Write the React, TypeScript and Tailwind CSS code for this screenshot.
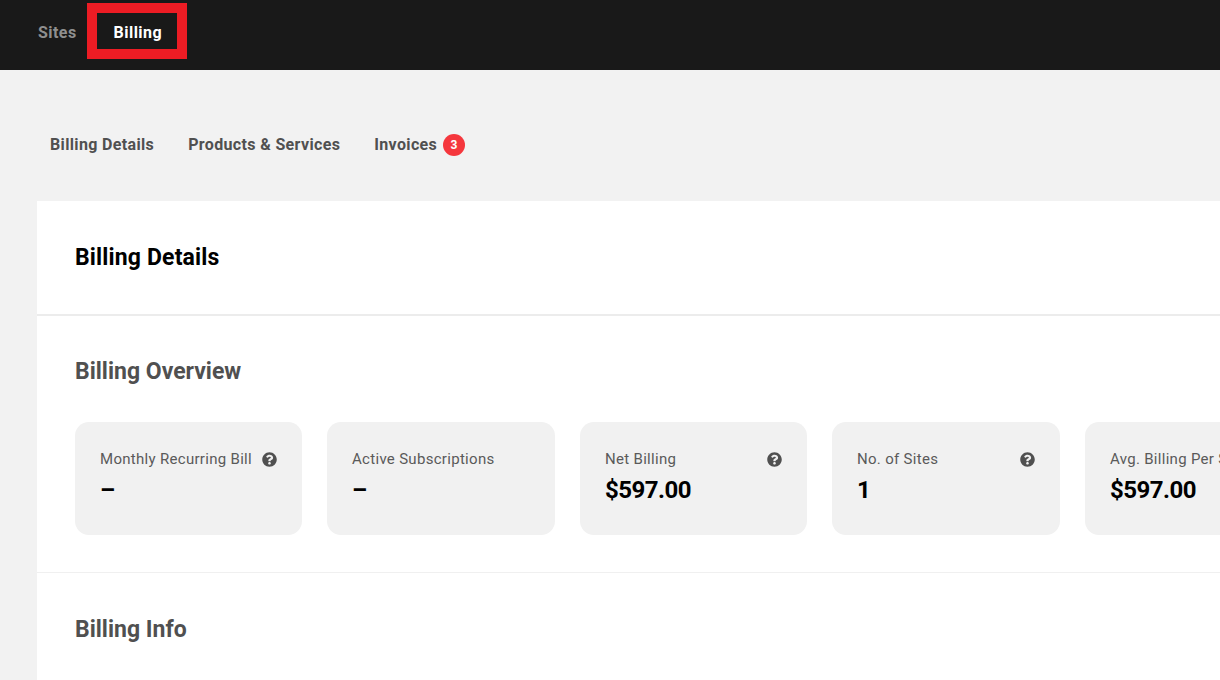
import React from "react";
import { FaQuestionCircle } from "react-icons/fa";

const cards = [
    { label: "Monthly Recurring Bill", value: "–", help: true, width: "w-[227px]" },
    { label: "Active Subscriptions", value: "–", help: false, width: "w-[228px]" },
    { label: "Net Billing", value: "$597.00", help: true, width: "w-[227px]" },
    { label: "No. of Sites", value: "1", help: true, width: "w-[228px]" },
    { label: "Avg. Billing Per Site", value: "$597.00", help: true, width: "w-[227px]" },
];

export default function App() {
    return (
        <div className="w-[1220px] h-[680px] overflow-hidden bg-[#f2f2f2] font-['Roboto',sans-serif]">
            {/* Top nav */}
            <header className="relative h-[70px] bg-[#191919] flex items-start pl-[38px] pt-[23px] gap-[37px] text-base font-bold tracking-[0.45px] leading-5">
                <span className="text-[#8f8f8f]">Sites</span>
                <span className="text-white">Billing</span>
                {/* annotation box */}
                <div className="absolute left-[87px] top-[3px] w-[100px] h-[56px] border-[10px] border-[#ed1c24]" />
            </header>

            {/* Tabs */}
            <nav className="h-[131px] flex items-start pl-[50px] pt-[64px] gap-[34px] text-base font-bold tracking-[0.35px] leading-[22px] text-[#505050]">
                <span>Billing Details</span>
                <span>Products &amp; Services</span>
                <span className="flex items-center gap-[6px]">
                    Invoices
                    <span className="w-[22px] h-[22px] rounded-full bg-[#f5373d] text-white text-xs font-bold flex items-center justify-center">
                        3
                    </span>
                </span>
            </nav>

            {/* Panel */}
            <main className="ml-[37px] w-[1300px] h-[479px] bg-white">
                <div className="h-[115px] border-b-2 border-[#ececec] pl-[38px] pt-[42px]">
                    <h1 className="text-[23px] leading-[30px] font-bold tracking-[0.15px] text-black">Billing Details</h1>
                </div>

                <section className="h-[257px] border-b border-[#f0f0f0] pl-[38px] pt-[40px]">
                    <h2 className="text-[23px] leading-[32px] font-bold text-[#505050]">Billing Overview</h2>
                    <div className="flex gap-[25px] mt-[34px]">
                        {cards.map((card) => (
                            <StatCard key={card.label} {...card} />
                        ))}
                    </div>
                </section>

                <section className="pl-[38px] pt-[41px]">
                    <h2 className="text-[23px] leading-[32px] font-bold text-[#505050]">Billing Info</h2>
                </section>
            </main>
        </div>
    );
}

function StatCard({ label, value, help, width }: { label: string; value: string; help: boolean; width: string }) {
    return (
        <div className={`${width} h-[113px] shrink-0 rounded-[14px] bg-[#f1f1f1] pl-[25px] pr-[25px] pt-[27px]`}>
            <div className="flex items-center justify-between h-[20px]">
                <span className="text-[15px] leading-5 tracking-[0.3px] text-[#5a5a5a] whitespace-nowrap">{label}</span>
                {help && <FaQuestionCircle className="w-[15px] h-[15px] shrink-0 text-[#505050]" />}
            </div>
            <div className="mt-[5px] text-[24px] leading-8 font-bold tracking-[-0.5px] text-black">{value}</div>
        </div>
    );
}
